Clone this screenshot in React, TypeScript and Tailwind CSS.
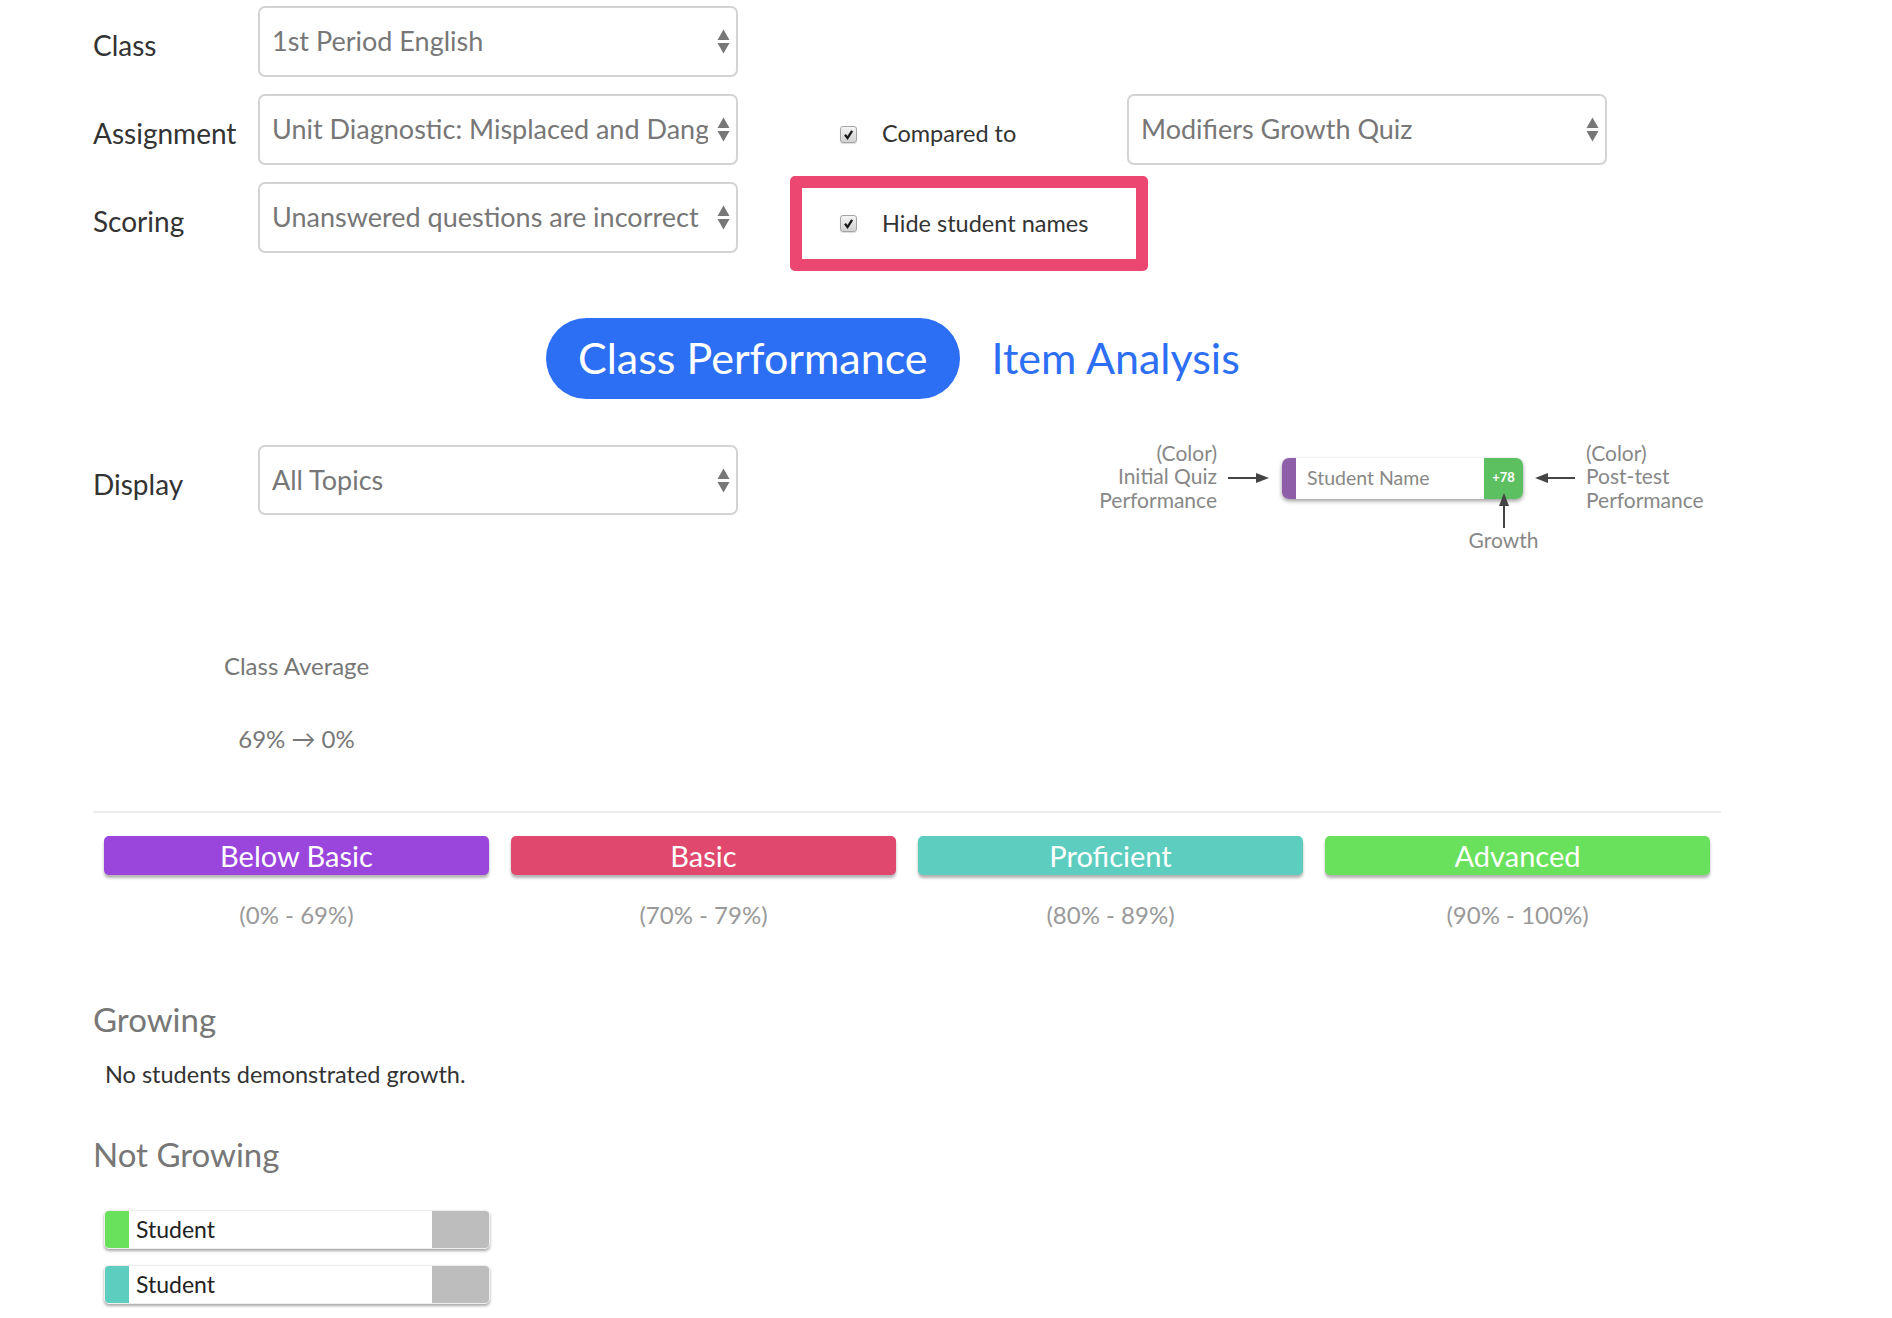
import React from 'react';

const SelectArrows = () => (
  <svg width="13" height="25" viewBox="0 0 13 25" className="shrink-0">
    <polygon points="0.5,11 6.5,0.5 12.5,11" fill="#777" />
    <polygon points="0.5,14 12.5,14 6.5,24.5" fill="#777" />
  </svg>
);

const SelectBox = ({ value, h = 'h-[71px]' }: { value: string; h?: string }) => (
  <div className={`flex items-center ${h} w-[480px] shrink-0 border-2 border-[#d3d3d3] rounded-[7px] bg-white pl-[12px] pr-[6px]`}>
    <span className="flex-1 min-w-0 overflow-hidden whitespace-nowrap text-[27px] text-[#777] mr-[9px]">{value}</span>
    <SelectArrows />
  </div>
);

const Label = ({ children }: { children: React.ReactNode }) => (
  <div className="w-[165px] shrink-0 pt-[7px] text-[28px] text-[#333]">{children}</div>
);

const Check = () => (
  <span className="flex items-center justify-center w-[17px] h-[17px] shrink-0 rounded-[3px] border border-[#a5a5a5] bg-linear-to-b from-[#f4f4f4] to-[#d2d2d2] shadow-[0_1px_1px_rgba(0,0,0,0.15)]">
    <svg viewBox="0 0 10 10" className="w-[11px] h-[11px]">
      <path d="M1.8 5.3 L4.1 8.2 L8.3 1.6" stroke="#1a1a1a" strokeWidth="2.1" fill="none" />
    </svg>
  </span>
);

const ArrowRight = () => (
  <svg width="41" height="10" viewBox="0 0 41 10" className="shrink-0">
    <line x1="0" y1="5" x2="31" y2="5" stroke="#444" strokeWidth="2" />
    <polygon points="28,0 41,5 28,10" fill="#444" />
  </svg>
);

const ArrowLeft = () => (
  <svg width="40" height="10" viewBox="0 0 40 10" className="shrink-0">
    <line x1="10" y1="5" x2="40" y2="5" stroke="#444" strokeWidth="2" />
    <polygon points="13,0 0,5 13,10" fill="#444" />
  </svg>
);

const levels = [
  { name: 'Below Basic', range: '(0% - 69%)', color: 'bg-[#9a45dc]' },
  { name: 'Basic', range: '(70% - 79%)', color: 'bg-[#e0486d]' },
  { name: 'Proficient', range: '(80% - 89%)', color: 'bg-[#5ccdbe]' },
  { name: 'Advanced', range: '(90% - 100%)', color: 'bg-[#6ae15c]' },
];

const StudentRow = ({ color }: { color: string }) => (
  <div className="flex w-[386px] h-[39px] rounded-[5px] overflow-hidden bg-white shadow-[0_2px_3px_rgba(0,0,0,0.35)] border border-[#eee]">
    <div className={`w-[24px] shrink-0 ${color}`} />
    <div className="flex-1 flex items-center pl-[7px] text-[23px] text-[#222]">Student</div>
    <div className="w-[57px] shrink-0 bg-[#bdbdbd]" />
  </div>
);

export default function App() {
  return (
    <div className="min-h-screen bg-white font-['Lato',sans-serif] text-[#333]">
      <div className="w-[1628px] ml-[93px] pt-[6px] pb-[40px]">
        {/* Filters */}
        <div className="flex flex-col gap-[17px]">
          <div className="flex items-center h-[71px]">
            <Label>Class</Label>
            <SelectBox value="1st Period English" />
          </div>
          <div className="flex items-center h-[71px]">
            <Label>Assignment</Label>
            <SelectBox value="Unit Diagnostic: Misplaced and Dangling Modifiers" />
            <div className="ml-[102px] w-[287px] shrink-0 flex items-center gap-[25px] pt-[9px] text-[23.5px] text-[#333]">
              <Check />
              <span>Compared to</span>
            </div>
            <SelectBox value="Modifiers Growth Quiz" />
          </div>
          <div className="flex items-center h-[71px]">
            <Label>Scoring</Label>
            <SelectBox value="Unanswered questions are incorrect" />
            <div className="ml-[52px] mt-[12px] w-[358px] h-[95px] shrink-0 border-[12px] border-[#eb4770] rounded-[5px] flex items-center gap-[25px] pl-[38px] text-[23.5px] text-[#333]">
              <Check />
              <span>Hide student names</span>
            </div>
          </div>
        </div>

        {/* Tabs */}
        <div className="flex items-center mt-[65px] ml-[453px]">
          <div className="h-[81px] px-[32px] rounded-full bg-[#2d6ff4] text-white text-[43px] flex items-center">Class Performance</div>
          <div className="ml-[32px] text-[43px] text-[#2d6ff4]">Item Analysis</div>
        </div>

        {/* Display + legend */}
        <div className="flex items-center h-[70px] mt-[46px]">
          <Label>Display</Label>
          <SelectBox value="All Topics" h="h-[70px]" />
          <div className="ml-[361px] mb-[4px] flex items-center text-[21px] leading-[23.5px] text-[#888]">
            <div className="w-[118px] text-right whitespace-nowrap -mt-[4px]">
              (Color)<br />Initial Quiz<br />Performance
            </div>
            <div className="ml-[11px]"><ArrowRight /></div>
            <div className="relative ml-[13px]">
              <div className="flex w-[241px] h-[41px] rounded-[7px] overflow-hidden bg-white shadow-[0_2px_4px_rgba(0,0,0,0.4)]">
                <div className="w-[14px] shrink-0 bg-[#8f5ea9]" />
                <div className="flex-1 flex items-center pl-[11px] text-[19.5px] text-[#888]">Student Name</div>
                <div className="w-[39px] shrink-0 bg-[#5cbf60] flex items-center justify-center text-[13px] font-bold text-white">+78</div>
              </div>
              <div className="absolute top-[35px] right-0 w-[39px] flex flex-col items-center">
                <svg width="10" height="35" viewBox="0 0 10 35">
                  <polygon points="0,13 5,0 10,13" fill="#444" />
                  <line x1="5" y1="10" x2="5" y2="35" stroke="#444" strokeWidth="2" />
                </svg>
                <div className="whitespace-nowrap">Growth</div>
              </div>
            </div>
            <div className="ml-[12px]"><ArrowLeft /></div>
            <div className="ml-[11px] whitespace-nowrap -mt-[4px]">
              (Color)<br />Post-test<br />Performance
            </div>
          </div>
        </div>

        {/* Class average */}
        <div className="grid grid-cols-4 mt-[137px]">
          <div className="text-center text-[24px] leading-[28px] text-[#777]">
            <div>Class Average</div>
            <div className="mt-[45px]">69% → 0%</div>
          </div>
        </div>

        <div className="h-[2px] bg-[#ececec] mt-[58px]" />

        {/* Levels */}
        <div className="grid grid-cols-4 mt-[23px]">
          {levels.map((l) => (
            <div key={l.name} className="px-[11px] flex flex-col">
              <div className={`h-[39px] rounded-[5px] ${l.color} text-white text-[29px] flex items-center justify-center shadow-[0_3px_3px_rgba(0,0,0,0.3)]`}>
                {l.name}
              </div>
              <div className="mt-[26px] text-center text-[24px] leading-[28px] text-[#999]">{l.range}</div>
            </div>
          ))}
        </div>

        {/* Growing */}
        <div className="mt-[70px] text-[33px] leading-[40px] text-[#777]">Growing</div>
        <div className="mt-[21px] ml-[12px] text-[23.5px] leading-[28px] text-[#333]">No students demonstrated growth.</div>

        <div className="mt-[46px] text-[33px] leading-[40px] text-[#777]">Not Growing</div>
        <div className="mt-[36px] ml-[11px] flex flex-col gap-[16px]">
          <StudentRow color="bg-[#6ae15c]" />
          <StudentRow color="bg-[#5ccdbe]" />
        </div>
      </div>
    </div>
  );
}
